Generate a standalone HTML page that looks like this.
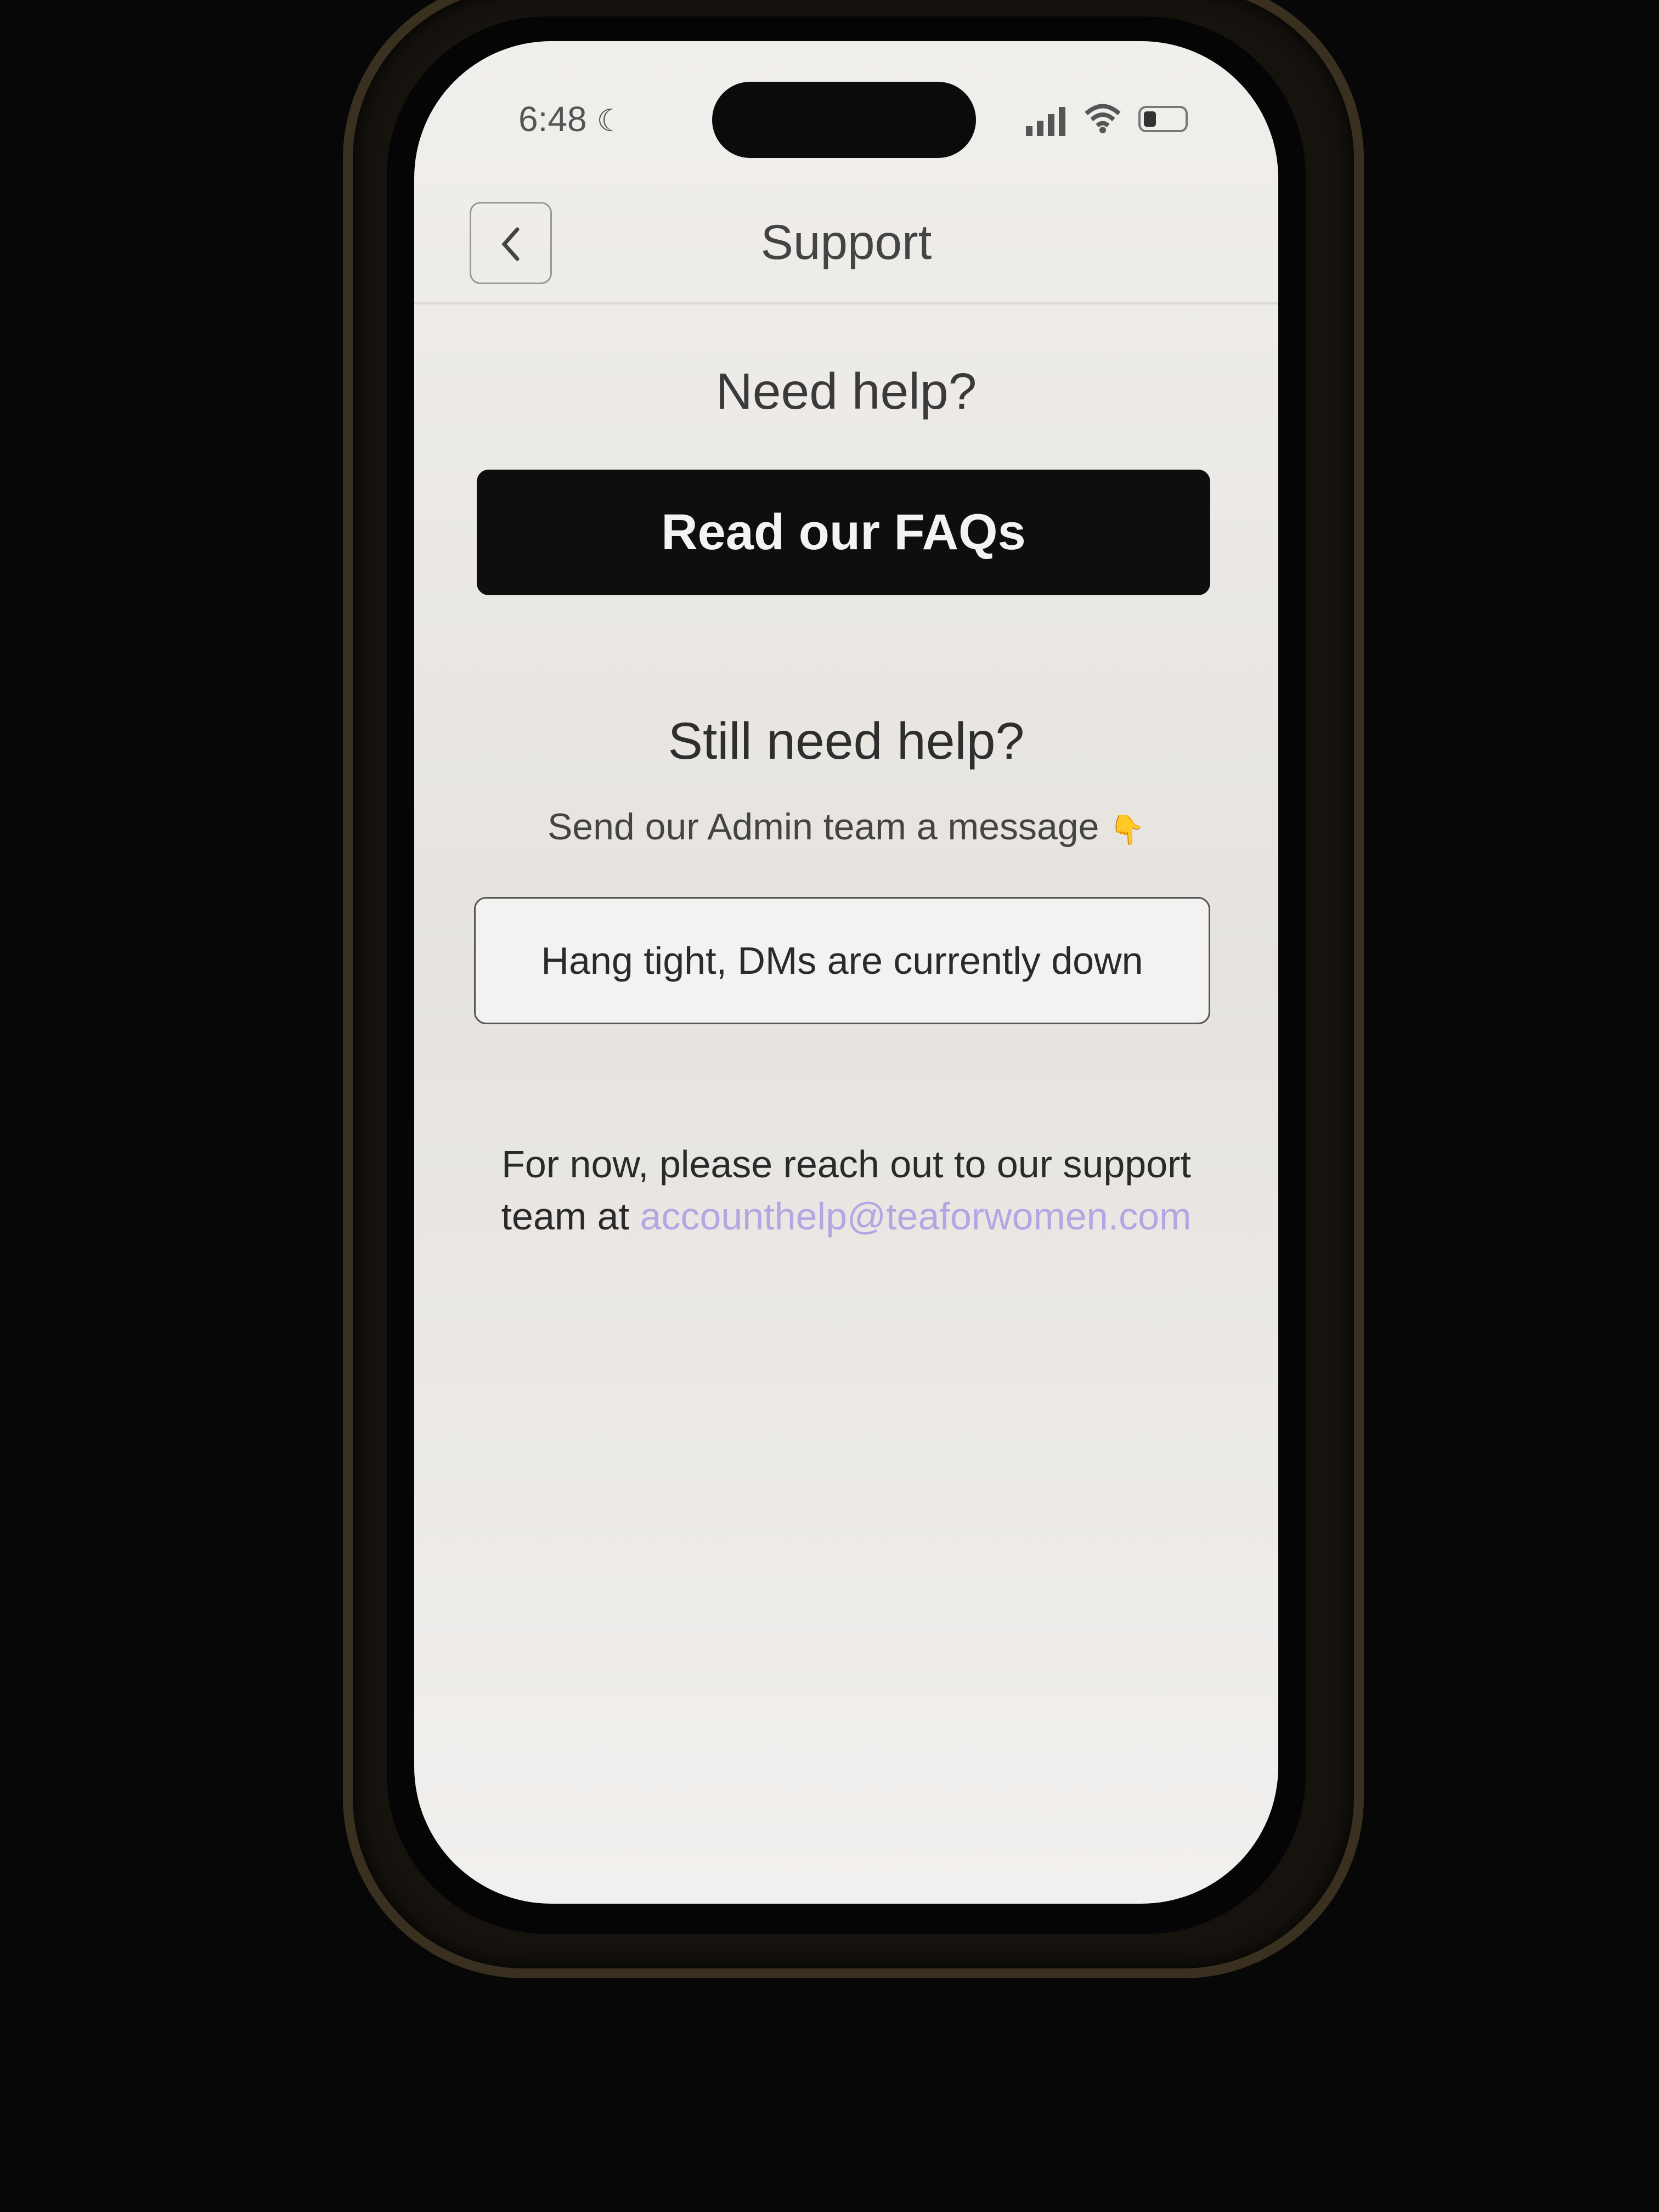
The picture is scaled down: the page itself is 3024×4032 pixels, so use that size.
<!DOCTYPE html>
<html><head><meta charset="utf-8"><style>
html,body{margin:0;padding:0;}
body{width:3024px;height:4032px;background:#070707;position:relative;overflow:hidden;font-family:"Liberation Sans",sans-serif;}
.case{position:absolute;left:625px;top:-40px;width:1825px;height:3610px;border-radius:330px;background:#16130e;border:18px solid #3a3020;box-shadow:0 0 40px #000 inset;}
.bezel{position:absolute;left:705px;top:30px;width:1675px;height:3495px;border-radius:290px;background:#050505;}
.screen{position:absolute;left:755px;top:75px;width:1575px;height:3395px;border-radius:250px;background:linear-gradient(180deg,#f1efec 0%,#e6e3df 50%,#f2f0ee 100%);overflow:hidden;}
.t{position:absolute;left:0;width:1575px;text-align:center;color:#2a2a2a;}
.island{position:absolute;left:543px;top:74px;width:481px;height:139px;border-radius:70px;background:#0b0b0b;}
</style></head><body>
<div class="case"></div>
<div class="bezel"></div>
<div class="screen">
  <div style="position:absolute;left:190px;top:105px;font-size:64px;color:#555;">6:48 <span style="font-size:56px">☾</span></div>
  <div class="island"></div>
  <svg style="position:absolute;left:1115px;top:115px" width="90" height="60"><rect x="0" y="40" width="12" height="18" fill="#555"/><rect x="20" y="30" width="12" height="28" fill="#555"/><rect x="40" y="18" width="12" height="40" fill="#555"/><rect x="60" y="5" width="12" height="53" fill="#555"/></svg>
  <svg style="position:absolute;left:1220px;top:110px" width="70" height="60"><path d="M5 22 Q35 -5 65 22 M15 33 Q35 15 55 33 M25 44 Q35 35 45 44" stroke="#555" stroke-width="8" fill="none"/><circle cx="35" cy="52" r="6" fill="#555"/></svg>
  <div style="position:absolute;left:1320px;top:118px;width:82px;height:40px;border:4px solid #777;border-radius:14px;"><div style="margin:6px;width:22px;height:28px;background:#333;border-radius:5px"></div></div>
  <div style="position:absolute;left:101px;top:293px;width:150px;height:150px;border:3px solid #999;border-radius:20px;box-sizing:border-box;"></div>
  <svg style="position:absolute;left:150px;top:335px" width="50" height="70"><path d="M38 8 L14 35 L38 62" stroke="#444" stroke-width="7" fill="none" stroke-linecap="round"/></svg>
  <div class="t" style="top:315px;font-size:89px;color:#444;">Support</div>
  <div style="position:absolute;left:0;top:476px;width:1575px;height:4px;background:#dcd9d5"></div>
  <div class="t" style="top:585px;font-size:93px;color:#3a3a3a;">Need help?</div>
  <div style="position:absolute;left:114px;top:781px;width:1337px;height:229px;background:#0e0e0e;border-radius:22px;color:#f3f3f3;font-weight:bold;font-size:92px;text-align:center;line-height:229px;">Read our FAQs</div>
  <div class="t" style="top:1222px;font-size:95px;color:#2e2e2e;">Still need help?</div>
  <div class="t" style="top:1393px;font-size:68px;color:#444;">Send our Admin team a message <span style="color:#e2b640;font-size:52px">👇</span></div>
  <div style="position:absolute;left:109px;top:1560px;width:1342px;height:232px;border:3px solid #555;border-radius:22px;box-sizing:border-box;background:#f3f2f0;text-align:center;line-height:226px;font-size:70px;color:#2a2a2a;">Hang tight, DMs are currently down</div>
  <div class="t" style="top:2000px;font-size:70px;line-height:95px;color:#2a2a2a;">For now, please reach out to our support<br>team at <span style="color:#b3a7e2">accounthelp@teaforwomen.com</span></div>
</div>
</body></html>
